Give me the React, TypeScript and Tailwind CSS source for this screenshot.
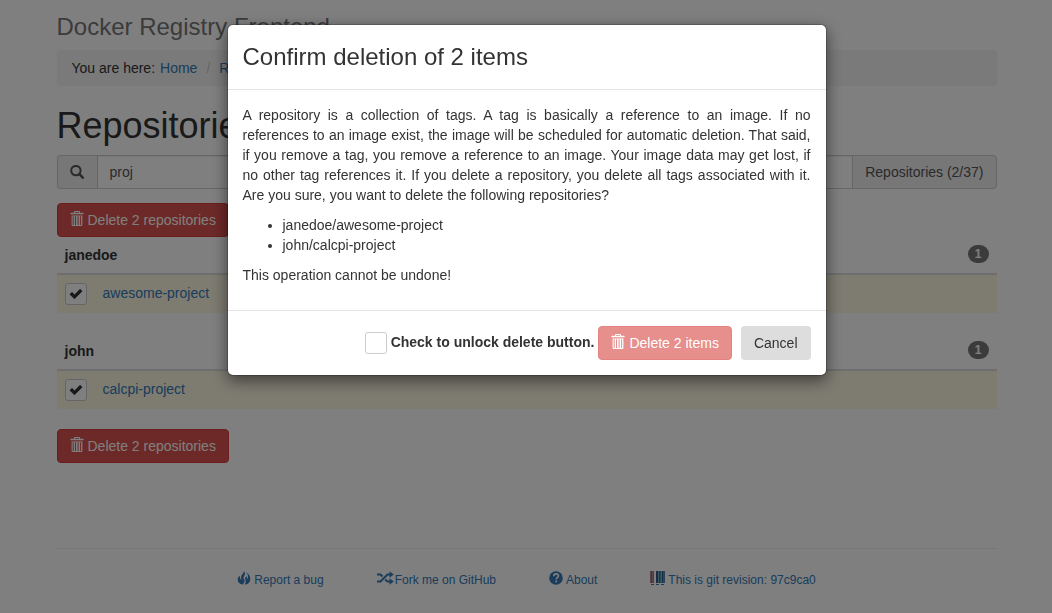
import { useState, type ReactNode } from "react";

function TrashIcon() {
  return (
    <svg viewBox="0 0 14 16" className="h-4 w-3.5 shrink-0" fill="currentColor" aria-hidden="true">
      <path d="M4 1.8V1a1 1 0 0 1 1-1h4a1 1 0 0 1 1 1v.8h3.2q.4 0 .4.4v1H.4v-1q0-.4.4-.4zM5 1v.8h4V1z" />
      <path
        fillRule="evenodd"
        d="M1.6 4.4h10.8v9.4q0 1.2-1.2 1.2H2.8q-1.2 0-1.2-1.2zM2.7 5.3v8.6h1V5.3zM5 5.3v8.6h1V5.3zM7.6 5.3v8.6h1V5.3zM10.1 5.3v8.6h1V5.3z"
      />
    </svg>
  );
}

function SearchIcon() {
  return (
    <svg viewBox="0 0 14 14" className="size-3.5" fill="none" stroke="currentColor" aria-hidden="true">
      <circle cx="5.9" cy="5.6" r="4.700" strokeWidth="2" />
      <path d="M9.400 9.200l3.400 3.400" strokeWidth="2.600" strokeLinecap="round" />
    </svg>
  );
}

function CheckIcon() {
  return (
    <svg
      viewBox="0 0 14 14"
      className="pointer-events-none col-start-1 row-start-1 hidden size-3.5 peer-checked:block"
      fill="#333"
      aria-hidden="true"
    >
      <path d="M.9 7l1.700-1.700q.4-.4.8 0L5.500 7.400l5.200-5.200q.4-.4.8 0l1.600 1.600q.4.4 0 .8L5.900 11.800q-.4.4-.8 0L.9 7.800q-.4-.4 0-.8z" />
    </svg>
  );
}

function FireIcon() {
  return (
    <svg viewBox="0 0 14 14" className="size-3.5" fill="currentColor" aria-hidden="true">
      <path d="M7 0c1.400 1.700 1.300 3.300.3 4.800-.9 1.300-1 2.600-.1 4 .6.900.5 2-.2 2.900l-1.300 1.800C3 13.300.7 11.300.7 8.600.7 6.700 1.600 5.300 2.900 4.400c-.3 1.800.1 3.300 1.200 4.400l.3-.2C3.600 6.500 4 4.700 5.500 3 6.500 2 7.100 1.100 7 0z" />
      <path d="M9.400 1.500c2.500 1.500 3.900 3.700 3.900 6.500 0 2.700-1.700 4.900-4.300 5.600l-1.500-.1c1.200-1.200 1.600-2.700 1-4.300-.6-1.300-.5-2.300.4-3.400l.5-.6c.7.900.9 1.900.8 2.900l.4-.1c.8-2.200.6-4.300-1.200-6.500z" />
    </svg>
  );
}

function RandomIcon() {
  return (
    <svg viewBox="0 0 17 14" className="h-3.5 w-[17px]" fill="none" stroke="currentColor" strokeWidth="2" aria-hidden="true">
      <path d="M0 3.500h3.500l2 1.900M0 10.500h3.500l7-7H13M8.200 8.400l2.300 2.100H13" />
      <path d="M12.500.3v6.400l4.300-3.200zM12.500 7.300v6.400l4.300-3.200z" fill="currentColor" stroke="none" />
    </svg>
  );
}

function QuestionIcon() {
  return (
    <svg viewBox="0 0 14 14" className="size-3.5" aria-hidden="true">
      <circle cx="7" cy="7" r="6.800" fill="currentColor" />
      <path d="M4.800 5.300C4.800 3.600 5.800 2.900 7.100 2.900s2.300.8 2.300 2c0 1.700-2.200 1.700-2.200 3.500" fill="none" stroke="#fff" strokeWidth="1.600" />
      <path d="M6.300 9.600h1.800v1.700H6.300z" fill="#fff" />
    </svg>
  );
}

function BarcodeIcon() {
  return (
    <svg viewBox="0 0 15 14" className="h-3.5 w-[15px]" aria-hidden="true">
      <path d="M0 0h1v12H0z" fill="#a58a9c" />
      <path d="M1 0h1v12H1z" fill="#5a78b0" />
      <path d="M2 0h1v12H2z" fill="#c0848a" />
      <path d="M3 0h1v12H3z" fill="#5a90b0" />
      <path d="M6 0h2v12H6zM12 0h1v12h-1z" fill="#235f93" />
      <path d="M8 0h1v12H8zM11 0h1v12h-1z" fill="#a0a8c0" />
      <path d="M9 0h1v12H9z" fill="#2a6f9f" />
      <path d="M10 0h1v12h-1zM13 0h1v12h-1z" fill="#4898a8" />
      <path d="M14 0h1v12h-1z" fill="#6080a8" />
      <path d="M1 13h3v1H1zM6 13h3v1H6zM11 13h3v1h-3z" fill="#337ab7" />
    </svg>
  );
}

function Tick({ id, label, checked, onChange }: { id: string; label?: string; checked: boolean; onChange: (v: boolean) => void }) {
  return (
    <span className="grid size-[22px] shrink-0 place-items-center">
      <input
        id={id}
        type="checkbox"
        aria-label={label}
        checked={checked}
        onChange={(e) => onChange(e.target.checked)}
        className="peer col-start-1 row-start-1 size-[22px] appearance-none rounded-[3px] border border-[#ccc] bg-white"
      />
      <CheckIcon />
    </span>
  );
}

function DeleteButton({ children, disabled }: { children: ReactNode; disabled?: boolean }) {
  return (
    <button
      type="button"
      disabled={disabled}
      className="inline-flex h-[34px] items-center gap-1 rounded border border-[#d43f3a] bg-[#d9534f] px-3 whitespace-nowrap text-white disabled:opacity-65"
    >
      <span className="pb-0.5">
        <TrashIcon />
      </span>
      {children}
    </button>
  );
}

function RepoTable({ owner, repo }: { owner: string; repo: string }) {
  const [checked, setChecked] = useState(true);
  return (
    <table className="mb-5 w-full border-separate border-spacing-0">
      <thead>
        <tr className="h-[38px] align-top">
          <th colSpan={2} className="border-b-2 border-[#ddd] px-2 pt-2 text-left font-bold">
            {owner}
          </th>
          <th className="border-b-2 border-[#ddd] px-2 pt-2">
            <span className="ml-auto block w-fit rounded-[10px] bg-[#777] px-[7px] py-[3px] text-xs leading-3 font-bold text-white">
              1
            </span>
          </th>
        </tr>
      </thead>
      <tbody>
        <tr className="h-[38px] bg-[#fcf8e3] align-top">
          <td className="w-[38px] pt-2 pl-2">
            <Tick id={repo} label={`Select ${repo}`} checked={checked} onChange={setChecked} />
          </td>
          <td colSpan={2} className="px-2 pt-2">
            <a href="#" className="text-[#337ab7]">
              {repo}
            </a>
          </td>
        </tr>
      </tbody>
    </table>
  );
}

function FooterLink({ icon, gap, children }: { icon: ReactNode; gap: string; children: ReactNode }) {
  return (
    <a href="#" className={`flex items-center ${gap}`}>
      <span className="pb-1">{icon}</span>
      {children}
    </a>
  );
}

function ConfirmDialog() {
  const [unlocked, setUnlocked] = useState(false);
  return (
    <div className="fixed inset-0 flex items-start justify-center bg-black/50 pt-6 pl-px">
      <div
        role="dialog"
        aria-modal="true"
        aria-labelledby="confirm-title"
        className="w-full max-w-[600px] rounded-md border border-black/20 bg-white bg-clip-padding shadow-[0_5px_15px_rgba(0,0,0,0.5)]"
      >
        <header className="border-b border-[#e5e5e5] px-[15px] py-[19px]">
          <h3 id="confirm-title" className="text-2xl leading-[26px] font-medium">
            Confirm deletion of 2 items
          </h3>
        </header>
        <div className="flex flex-col gap-2.5 px-[15px] pt-[15px] pb-[25px]">
          <p className="text-justify">
            A repository is a collection of tags. A tag is basically a reference to an image. If no references to an image exist, the
            image will be scheduled for automatic deletion. That said, if you remove a tag, you remove a reference to an image. Your
            image data may get lost, if no other tag references it. If you delete a repository, you delete all tags associated with
            it. Are you sure, you want to delete the following repositories?
          </p>
          <ul className="list-disc pl-10">
            <li>janedoe/awesome-project</li>
            <li>john/calcpi-project</li>
          </ul>
          <p>This operation cannot be undone!</p>
        </div>
        <footer className="flex items-center justify-end gap-1 border-t border-[#e5e5e5] p-[15px]">
          <Tick id="unlock" checked={unlocked} onChange={setUnlocked} />
          <label htmlFor="unlock" className="pb-0.5 font-bold">
            Check to unlock delete button.
          </label>
          <DeleteButton disabled={!unlocked}>Delete 2 items</DeleteButton>
          <button type="button" className="ml-[5px] h-[34px] rounded bg-[#ddd] px-[13px] text-[#333]">
            Cancel
          </button>
        </footer>
      </div>
    </div>
  );
}

export default function App() {
  const [query, setQuery] = useState("proj");
  return (
    <div className="min-h-screen bg-white pl-px font-['Liberation_Sans',Arial,sans-serif] text-sm leading-5 text-[#333]">
      <div className="mx-auto max-w-[970px] px-[15px] pt-3.5">
        <h3 className="mb-2.5 text-2xl leading-[26px] text-[#777]">Docker Registry Frontend</h3>
        <nav className="mb-5 flex rounded bg-[#f5f5f5] px-[15px] py-2">
          <span className="mr-[5px]">You are here:</span>
          <a href="#" className="text-[#337ab7]">
            Home
          </a>
          <span className="mx-[9px] text-[#ccc]">/</span>
          <a href="#" className="text-[#337ab7]">
            Repositories
          </a>
        </nav>
        <h1 className="mb-2.5 text-4xl leading-[39px]">Repositories</h1>
        <div className="mb-3.5 flex h-[34px] text-[#555]">
          <label
            htmlFor="search"
            aria-label="Search"
            className="flex items-center rounded-l border border-r-0 border-[#ccc] bg-[#eee] pr-[13px] pl-3"
          >
            <SearchIcon />
          </label>
          <input
            id="search"
            type="text"
            value={query}
            onChange={(e) => setQuery(e.target.value)}
            className="min-w-0 flex-1 border border-r-0 border-[#ccc] px-3 shadow-[inset_0_1px_1px_rgba(0,0,0,0.075)]"
          />
          <span className="flex items-center rounded-r border border-[#ccc] bg-[#eee] px-3">Repositories (2/37)</span>
        </div>
        <DeleteButton>Delete 2 repositories</DeleteButton>
        <RepoTable owner="janedoe" repo="awesome-project" />
        <RepoTable owner="john" repo="calcpi-project" />
        <DeleteButton>Delete 2 repositories</DeleteButton>
        <footer className="mt-[85px] flex flex-wrap justify-center gap-x-[53px] border-t border-[#eee] pt-[21px] text-xs leading-5 text-[#337ab7]">
          <FooterLink icon={<FireIcon />} gap="gap-[3px]">
            Report a bug
          </FooterLink>
          <FooterLink icon={<RandomIcon />} gap="gap-px">
            Fork me on GitHub
          </FooterLink>
          <FooterLink icon={<QuestionIcon />} gap="gap-[3px]">
            About
          </FooterLink>
          <FooterLink icon={<BarcodeIcon />} gap="gap-[3px]">
            This is git revision: 97c9ca0
          </FooterLink>
        </footer>
      </div>
      <ConfirmDialog />
    </div>
  );
}
